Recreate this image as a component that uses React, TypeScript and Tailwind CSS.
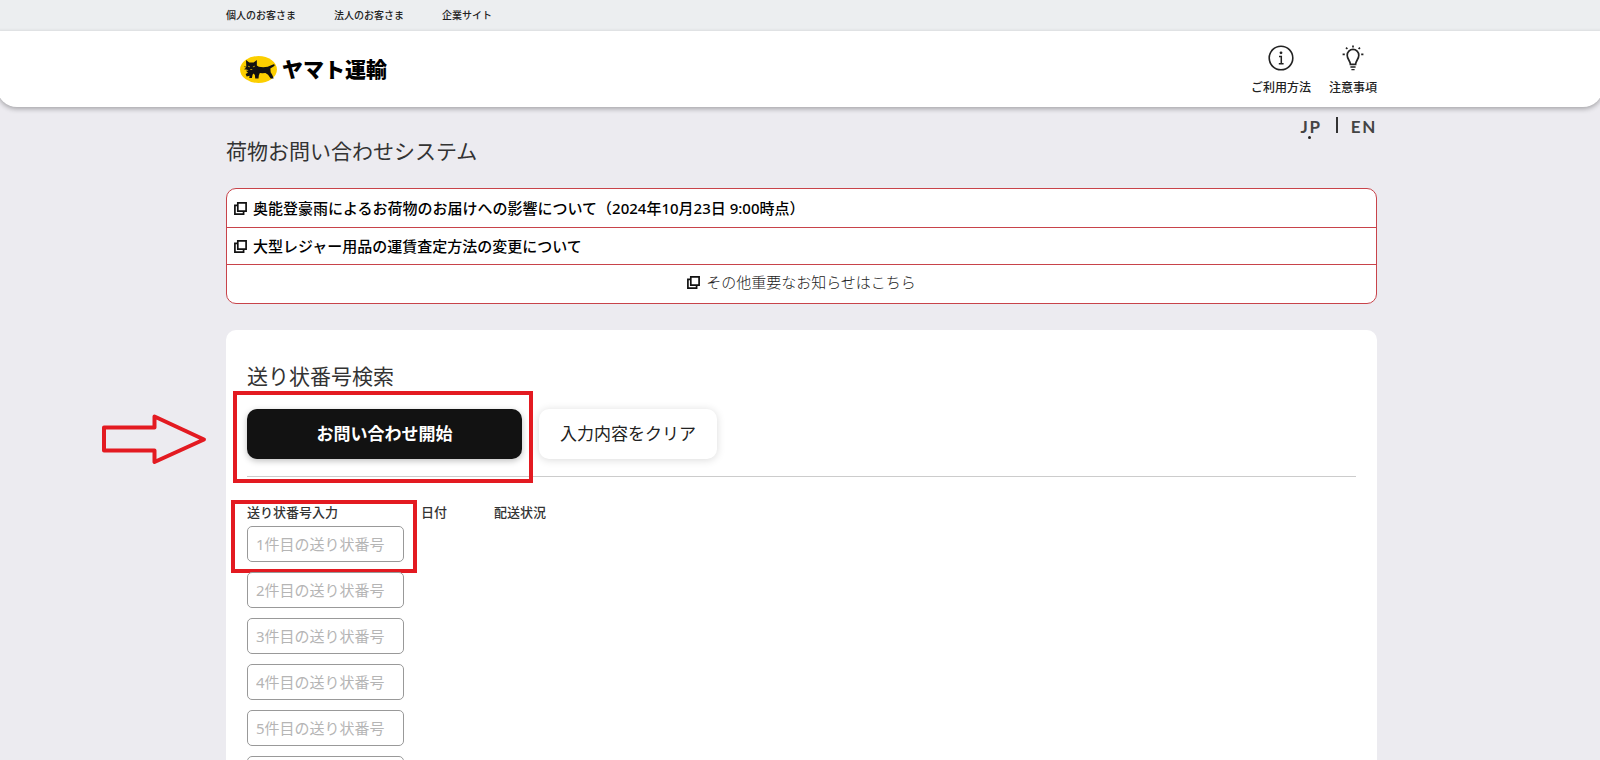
import type { ReactNode } from 'react';

const siteLinks = ['個人のお客さま', '法人のお客さま', '企業サイト'];

const notices = [
  '奥能登豪雨によるお荷物のお届けへの影響について（2024年10月23日 9:00時点）',
  '大型レジャー用品の運賃査定方法の変更について',
];

const slipRows = [1, 2, 3, 4, 5, 6];

function Container({ children, className = '' }: { children: ReactNode; className?: string }) {
  return <div className={`mx-auto max-w-[1154px] pl-[3px] ${className}`}>{children}</div>;
}

function CatLogo() {
  return (
    <svg viewBox="28 33 112 82" className="h-[27px] w-[37px]" aria-hidden="true">
      <ellipse cx="84" cy="74" rx="56" ry="41" fill="#fccf00" />
      <path
        d="M46 45 L56 53 H69 L79 45 L79 62 L85 66 Q98 68 112 66 L130 58 Q135 59 132 63 L120 71 L121 82 L126 91 L130 101 H121 L113 90 L105 85 Q95 86 88 85 L85 92 L84 101 H74 L73 91 L69 86 L66 90 L64 100 H56 L57 93 L48 95 L45 88 L52 84 L46 78 L54 77 L43 72 L47 66 Z"
        fill="#111"
      />
      <path d="M52 64 l6 2 M67 66 l6 -2 M59 74 h6" stroke="#fccf00" strokeWidth="2" fill="none" />
      <path d="M41 65 l7 2 M41 73 h7 M78 71 h7" stroke="#111" strokeWidth="2" />
    </svg>
  );
}

function InfoIcon() {
  return (
    <svg viewBox="0 0 26 26" className="size-[26px]" fill="none" stroke="#222" strokeWidth="1.6" aria-hidden="true">
      <circle cx="13" cy="13" r="11.8" />
      <circle cx="13" cy="7.8" r="1.4" fill="#222" stroke="none" />
      <path d="M11 11.4 H13.3 V18.6 M10.8 18.8 H15.6" strokeWidth="1.5" />
    </svg>
  );
}

function BulbIcon() {
  return (
    <svg viewBox="0 0 26 26" className="size-[26px]" fill="none" stroke="#222" strokeWidth="1.7" aria-hidden="true">
      <path d="M10.4 19.4 C10.2 15.6 7.2 14.2 7.2 10.2 A5.8 5.8 0 0 1 18.8 10.2 C18.8 14.2 15.8 15.6 15.6 19.4 Z" />
      <path d="M10.4 22 H15.6 M11.4 24.6 H14.6" strokeWidth="1.3" />
      <path d="M13 .6 V2.4 M6 2.6 L7.4 4 M20 2.6 L18.6 4 M2.6 9.4 H4.8 M21.2 9.4 H23.4" />
    </svg>
  );
}

function WindowIcon() {
  return (
    <svg viewBox="0 0 13 13" className="size-[13px] shrink-0" fill="none" stroke="#111" strokeWidth="1.7" aria-hidden="true">
      <path d="M3.8 .9 H12.1 V9.2 H3.8 Z" />
      <path d="M3.4 3.4 H.9 V12.1 H9.6 V9.6" />
    </svg>
  );
}

function Arrow() {
  return (
    <svg
      viewBox="0 0 106 52"
      className="pointer-events-none absolute -left-[146px] top-[4px] h-[52px] w-[106px]"
      fill="none"
      stroke="#e31a21"
      strokeWidth="4"
      strokeLinejoin="round"
      aria-hidden="true"
    >
      <path d="M3 14.5 H53.5 V3.5 L103 26.5 L53.5 49 V37.5 H3 Z" />
    </svg>
  );
}

export default function App() {
  return (
    <div className="min-h-screen overflow-x-clip bg-[#ecebf0] font-['Noto_Sans','Noto_Sans_CJK_JP',sans-serif] text-[#222]">
      <nav className="bg-[#eceef0]">
        <Container className="flex h-[31px] items-center gap-[38px] text-[10px]">
          {siteLinks.map((label) => (
            <a key={label} href="#" className="font-medium">
              {label}
            </a>
          ))}
        </Container>
      </nav>

      <header className="-mx-[3px] rounded-b-[20px] bg-white shadow-[0_2px_5px_rgba(0,0,0,0.3)]">
        <Container className="flex h-[76px] items-center justify-between">
          <a href="#" className="flex items-center gap-[5px] pl-[14px]">
            <CatLogo />
            <span className="text-[21px] leading-none font-black text-black">ヤマト運輸</span>
          </a>
          <div className="flex gap-[18px] pt-[3px] text-[12px] leading-4 font-medium">
            <a href="#" className="flex flex-col items-center gap-[9px]">
              <InfoIcon />
              ご利用方法
            </a>
            <a href="#" className="flex flex-col items-center gap-[9px]">
              <BulbIcon />
              注意事項
            </a>
          </div>
        </Container>
      </header>

      <Container>
        <div className="flex items-start justify-between">
          <h1 className="pt-[28px] text-[21px] leading-8 text-[#333]">荷物お問い合わせシステム</h1>
          <div className="flex items-start pt-2 font-['Lato',sans-serif] text-[17px] leading-6 font-bold tracking-widest text-[#444]">
            <a href="#" className="relative pr-[14px]">
              JP
              <span className="absolute top-[21px] left-[8px] size-[3px] rounded-full bg-[#222]" />
            </a>
            <span className="mt-[2px] h-4 w-[2px] bg-[#333]" />
            <a href="#" className="pl-[13px]">
              EN
            </a>
          </div>
        </div>

        <section className="mt-[21px] rounded-[10px] border border-[#c8434a] bg-white text-[15px]">
          {notices.map((text) => (
            <a
              key={text}
              href="#"
              className="flex h-[37px] items-center gap-[6px] border-b border-[#c8434a] pl-[7px] font-medium text-black first:h-[39px]"
            >
              <WindowIcon />
              {text}
            </a>
          ))}
          <a href="#" className="flex h-[38px] items-center justify-center gap-[6px] pb-1 font-light text-[#222]">
            <WindowIcon />
            その他重要なお知らせはこちら
          </a>
        </section>

        <main className="mt-[26px] rounded-t-[10px] bg-white px-[21px] pt-[30px]">
          <h2 className="text-[21px] leading-8 text-[#333]">送り状番号検索</h2>
          <div className="mt-[17px] flex gap-[17px] border-b border-[#ccc] pb-[17px] text-[17px]">
            <div className="relative">
              <button className="h-[50px] w-[275px] rounded-[10px] bg-[#121212] font-bold text-white shadow-[0_2px_6px_rgba(0,0,0,0.25)]">
                お問い合わせ開始
              </button>
              <div className="pointer-events-none absolute -top-[18px] -right-[11px] -bottom-[24px] -left-[14px] border-4 border-[#e31a21]" />
              <Arrow />
            </div>
            <button className="h-[50px] w-[178px] rounded-[10px] bg-white text-[#222] shadow-[0_1px_8px_rgba(0,0,0,0.15)]">
              入力内容をクリア
            </button>
          </div>

          <table className="mt-[25px] w-full table-fixed text-left">
            <thead className="text-[13px] leading-5 text-[#333]">
              <tr>
                <th className="w-[174px] pb-1 font-medium">送り状番号入力</th>
                <th className="w-[73px] pb-1 font-medium">日付</th>
                <th className="pb-1 font-medium">配送状況</th>
              </tr>
            </thead>
            <tbody>
              {slipRows.map((n) => (
                <tr key={n}>
                  <td className="pb-[10px]">
                    <div className="relative w-[157px]">
                      <input
                        type="text"
                        aria-label={`${n}件目の送り状番号`}
                        placeholder={`${n}件目の送り状番号`}
                        className="block h-9 w-full rounded-[5px] border border-[#999] bg-white px-2 text-[15px] placeholder:text-[#b5b5b5]"
                      />
                      {n === 1 && (
                        <div className="pointer-events-none absolute -top-[26px] -right-[13px] -bottom-[11px] -left-[16px] border-4 border-[#e31a21]" />
                      )}
                    </div>
                  </td>
                  <td />
                  <td />
                </tr>
              ))}
            </tbody>
          </table>
        </main>
      </Container>
    </div>
  );
}
